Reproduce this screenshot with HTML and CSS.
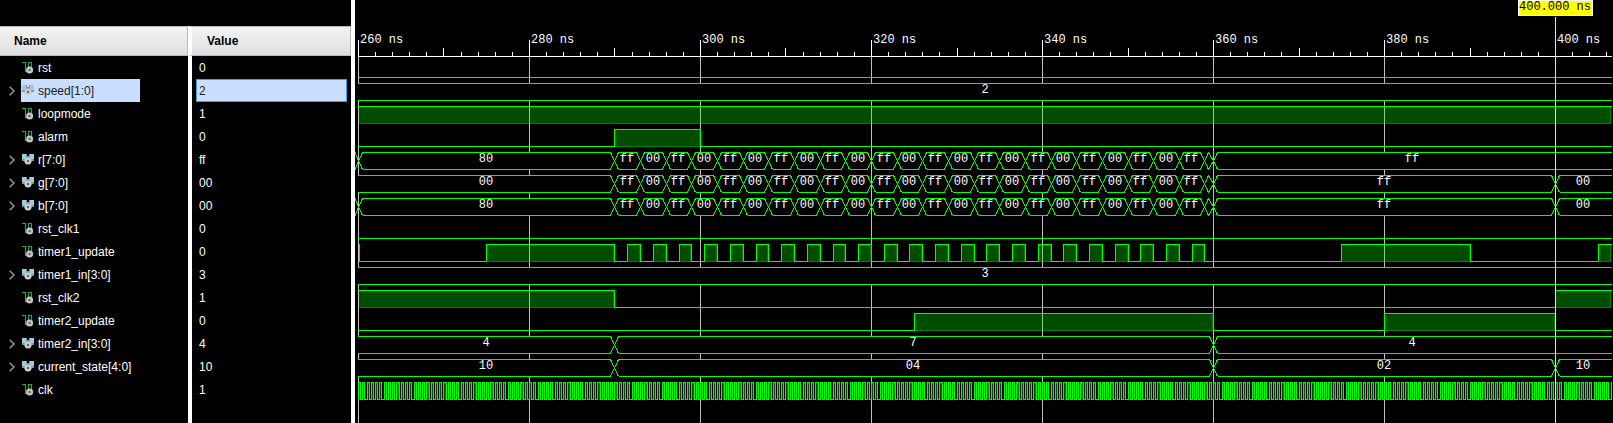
FILE: index.html
```html
<!DOCTYPE html>
<html lang="en">
<head>
<meta charset="utf-8">
<title>Waveform viewer</title>
<link rel="stylesheet" href="styles.css">
</head>
<body>
<svg class="sprite" aria-hidden="true">
  <symbol id="bit" viewBox="0 0 12 13">
    <path d="M0 1.5H3.5V10.5H5M6.5 10V1.5H9.5V7" fill="none" stroke="#35a050" stroke-width="1.2"/>
    <circle cx="7.6" cy="9" r="3.5" fill="#c6c6c6"/>
    <circle cx="7.6" cy="9" r="1.2" fill="#666"/>
  </symbol>
  <symbol id="bus" viewBox="0 0 12 13">
    <path d="M0 1H5V3H7V1H12V8H10L9 9H3L2 8H0Z" fill="#7d98a5"/>
    <path d="M0 1H4V6H0ZM8 1H12V6H8Z" fill="#9dcbe0"/>
    <circle cx="6" cy="8" r="3.5" fill="#cfcfcf"/>
    <circle cx="6" cy="8" r="1.2" fill="#666"/>
  </symbol>
  <symbol id="chevron" viewBox="0 0 6 10">
    <path d="M0.7 0.8L5 5L0.7 9.2" fill="none" stroke="#9a9a9a" stroke-width="1.4"/>
  </symbol>
</svg>
<main class="viewer">
  <section class="signals">
    <table class="signal-table">
      <thead><tr><th scope="col">Name</th><th scope="col">Value</th></tr></thead>
      <tbody id="signal-rows"></tbody>
    </table>
  </section>
  <section class="waves" id="waves" aria-label="Waveforms"></section>
</main>
<script src="viewer.js"></script>
</body>
</html>
```
FILE: styles.css
```css
* {
  box-sizing: border-box;
}

body {
  margin: 0;
  background: #000;
  color: #fff;
  font: 12px/16px "Liberation Sans", Arial, sans-serif;
}

.sprite {
  display: none;
}

.viewer {
  display: flex;
  min-height: 100vh;
}

.signals {
  flex: none;
  display: flex;
  width: 355px;
  padding-top: 26px;
  border-right: 4px solid #fff;
}

.signal-table {
  width: 100%;
  table-layout: fixed;
  border-collapse: separate;
  border-spacing: 0;
}

.signal-table th {
  width: 188px;
  height: 30px;
  padding: 0 14px;
  border: 1px solid #b9b9b9;
  border-left-width: 0;
  background: linear-gradient(#f3f3f3, #dfdfe1);
  color: #000;
  text-align: left;
}

.signal-table th + th {
  width: auto;
  padding-left: 15px;
  border-left: 4px solid #fff;
}

.signal-table td {
  height: 23px;
  padding: 0;
}

.signal-table td + td {
  padding: 0 4px;
  border-left: 4px solid #fff;
}

.signal-table .filler td {
  height: auto;
}

.name {
  display: flex;
  align-items: center;
  height: 23px;
}

.toggle {
  flex: none;
  display: flex;
  align-items: center;
  width: 21px;
  height: 23px;
  padding: 0 0 0 9px;
  border: 0;
  background: none;
}

.chevron {
  width: 6px;
  height: 10px;
}

.label {
  display: flex;
  align-items: center;
  gap: 4px;
  height: 23px;
  padding-left: 1px;
  white-space: nowrap;
}

.icon {
  width: 12px;
  height: 13px;
}

.value {
  height: 23px;
  padding: 3px 2px 0;
  border: 1px solid transparent;
}

.selected .label {
  width: 119px;
  background: #cadeff;
  color: #222;
}

.selected .value {
  border-color: #4a9bdc;
  background: #cadeff;
  color: #222;
}

.waves {
  flex: 1;
  min-width: 0;
  overflow: hidden;
}

.plot {
  display: block;
  width: 100%;
  height: 100%;
  font: 12px "Liberation Mono", monospace;
  shape-rendering: crispEdges;
}

.plot text {
  fill: #fff;
}

.ruler {
  stroke: #fff;
  fill: none;
}

.grid {
  stroke: #c0c0c0;
  fill: none;
}

.trace {
  stroke: #0f0;
  fill: none;
}

.high {
  fill: #0f0;
  fill-opacity: 0.3;
  stroke: #0f0;
  stroke-opacity: 0.3;
}

.mask {
  fill: #000;
}

.cursor {
  stroke: #ff0;
}

.cursor-box {
  fill: #ff0;
  stroke: #fff;
}

.plot .cursor-time {
  fill: #000;
}
```
FILE: viewer.js
```js
const START = 260;
const SCALE = 8.5507;
const ORIGIN = 3;
const FIRST_ROW = 56;
const ROW = 23;
const CURSOR = 400;

const pulses = [];
for (let t = 291.5; t < 359; t += 3) pulses.push([t, t + 1.5]);

function colour(first, last, afterCursor) {
  const list = [[first === '00' ? 250 : 260, first]];
  for (let i = 0; i < 24; i++) list.push([290 + 3 * i, i % 2 ? '00' : 'ff']);
  list.push([360, last]);
  if (afterCursor) list.push([400, afterCursor]);
  return list;
}

const signals = [
  { name: 'rst', value: '0', high: [] },
  { name: 'speed[1:0]', value: '2', bus: [[250, '2']], selected: true },
  { name: 'loopmode', value: '1', high: [[250, 900]] },
  { name: 'alarm', value: '0', high: [[290, 300]] },
  { name: 'r[7:0]', value: 'ff', bus: colour('80', 'ff') },
  { name: 'g[7:0]', value: '00', bus: colour('00', 'ff', '00') },
  { name: 'b[7:0]', value: '00', bus: colour('80', 'ff', '00') },
  { name: 'rst_clk1', value: '0', high: [] },
  { name: 'timer1_update', value: '0', high: [[250, 260.15], [275, 290], ...pulses, [375, 390], [405, 420]] },
  { name: 'timer1_in[3:0]', value: '3', bus: [[250, '3']] },
  { name: 'rst_clk2', value: '1', high: [[250, 290], [400, 900]] },
  { name: 'timer2_update', value: '0', high: [[325, 360], [380, 400]] },
  { name: 'timer2_in[3:0]', value: '4', bus: [[250, '4'], [290, '7'], [360, '4']] },
  { name: 'current_state[4:0]', value: '10', bus: [[250, '10'], [290, '04'], [360, '02'], [400, '10']] },
  { name: 'clk', value: '1', clock: 0.5 }
];

const px = t => Math.round(ORIGIN + (t - START) * SCALE - 0.04);
const path = (cls, d) => `<path class="${cls}" d="${d}"/>`;
const text = (x, y, s, anchor = 'start', cls = '') =>
  `<text class="${cls}" x="${x}" y="${y}" text-anchor="${anchor}">${s}</text>`;

function drawBits(high, top, right) {
  const hi = top + 4.5, lo = top + 21.5;
  const left = ORIGIN;
  let fills = '';
  let d = '';
  let x = left;
  for (const [from, to] of high) {
    const a = Math.max(px(from), left), b = Math.min(px(to), right);
    if (a >= right) break;
    if (a > x) d += `M${x} ${lo}H${a + 1}`;
    if (px(from) >= left) d += `M${a + 0.5} ${lo + 0.5}V${hi}`;
    d += `M${a} ${hi}H${b + (px(to) < right ? 1 : 0)}`;
    if (px(to) < right) d += `M${b + 0.5} ${hi}V${lo + 0.5}`;
    const end = b === right ? b - 1 : b;
    if (end - a > 2) {
      fills += `<rect class="high" x="${a + 1.5}" y="${hi + 1}" width="${end - a - 2}" height="16"/>`;
    } else if (end - a === 2) {
      fills += path('high', `M${a + 1.5} ${hi}V${lo}`);
    }
    x = b;
  }
  if (x < right) d += `M${x} ${lo}H${right}`;
  return fills + path('trace', d);
}

function drawBus(list, top, right) {
  const hi = top + 4.5, lo = top + 21.5;
  let d = '', labels = '', masks = '';
  list.forEach(([t, label], i) => {
    const open = t < START;
    const a = open ? ORIGIN : px(t);
    const b = i + 1 < list.length ? px(list[i + 1][0]) : right;
    const last = i + 1 === list.length;
    const wide = b - a > 12;
    if (!wide) {
      d += `M${a + 0.5} ${top + 13}L${a + 4.5} ${hi}L${b + 0.5} ${top + 13}L${a + 4.5} ${lo}Z`;
      return;
    }
    const l = open ? a : a + 4.5;
    const r = last ? b : b - 3.5;
    const lm = open ? a : a + 0.5;
    const rm = last ? b : b + 0.5;
    masks += `<path class="mask" d="M${lm} ${top + 13}L${l} ${hi}H${r}L${rm} ${top + 13}L${r} ${lo}H${l}Z"/>`;
    d += `M${l} ${hi}H${r}M${l} ${lo}H${r}`;
    if (!open) d += `M${l} ${hi}L${lm} ${top + 13}L${l} ${lo}`;
    if (!last) d += `M${r} ${hi}L${rm} ${top + 13}L${r} ${lo}`;
    if (t === START) d += `M0 ${hi}L3.5 ${top + 13}L0 ${lo}`;
    labels += text(Math.floor((a + b) / 2), top + 14, label, 'middle');
  });
  return masks + path('trace', d) + labels;
}

function drawClock(period, top, right) {
  const list = [];
  const end = START + (right - ORIGIN) / SCALE;
  for (let t = START; t < end; t += period) list.push([t, t + period / 2]);
  return drawBits(list, top, right);
}

function drawRuler(right, bottom) {
  let ruler = `M${ORIGIN} 56.5H${right}`, grid = '', labels = '';
  for (let t = START; px(t) < right; t += 2) {
    const x = px(t) + 0.5;
    const major = t % 20 === 0;
    ruler += `M${x} ${major ? 40 : t % 10 === 0 ? 48 : 52}V56`;
    if (major) {
      grid += `M${x} 57V${bottom}`;
      labels += text(px(t) + 2, 43, `${t} ns`);
    }
  }
  return path('grid', grid) + path('ruler', ruler) + labels;
}

function drawCursor(bottom) {
  const x = px(CURSOR);
  return path('cursor', `M${x + 0.5} 17V${bottom}`) +
    `<rect class="cursor-box" x="${x - 36.5}" y="0.5" width="74" height="15"/>` +
    text(x, 10, '400.000 ns', 'middle', 'cursor-time');
}

function drawPlot() {
  const host = document.getElementById('waves');
  const right = host.clientWidth - 1;
  const bottom = host.clientHeight;
  let out = drawRuler(right, bottom);
  signals.forEach((s, i) => {
    const top = FIRST_ROW + i * ROW;
    if (s.bus) out += drawBus(s.bus, top, right);
    else if (s.clock) out += drawClock(s.clock, top, right);
    else out += drawBits(s.high, top, right);
  });
  out += drawCursor(bottom);
  host.innerHTML = `<svg class="plot" role="img" aria-label="Signal waveforms">${out}</svg>`;
}

function drawRows() {
  const rows = signals.map(s => {
    const bus = Boolean(s.bus);
    const toggle = bus
      ? `<button class="toggle" type="button" aria-label="Expand ${s.name}"><svg class="chevron"><use href="#chevron"/></svg></button>`
      : '<span class="toggle"></span>';
    return `<tr class="${s.selected ? 'selected' : ''}"><td><div class="name">${toggle}` +
      `<span class="label"><svg class="icon"><use href="#${bus ? 'bus' : 'bit'}"/></svg>${s.name}</span></div></td>` +
      `<td><div class="value">${s.value}</div></td></tr>`;
  });
  document.getElementById('signal-rows').innerHTML =
    rows.join('') + '<tr class="filler"><td></td><td></td></tr>';
}

drawRows();
drawPlot();
window.addEventListener('resize', drawPlot);
```
